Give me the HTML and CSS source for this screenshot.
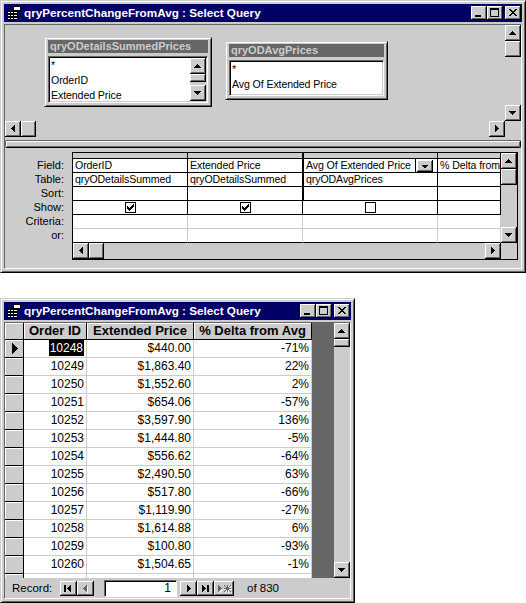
FILE: index.html
```html
<!DOCTYPE html>
<html lang="en">
<head>
<meta charset="utf-8">
<title>qryPercentChangeFromAvg : Select Query</title>
<link rel="stylesheet" href="styles.css">
</head>
<body>
<svg class="defs" aria-hidden="true">
  <defs>
    <symbol id="up" viewBox="0 0 16 16"><path d="M7 6h1v1h1v1h1v1h1v1H4V9h1V8h1V7h1z"/></symbol>
    <symbol id="dn" viewBox="0 0 16 16"><path d="M4 6h7v1h-1v1h-1v1h-1v1H7V9H6V8H5V7H4z"/></symbol>
    <symbol id="lt" viewBox="0 0 16 16"><path d="M6 7h1V6h1V5h1V4h1v7H9v-1H8V9H7V8H6z"/></symbol>
    <symbol id="rt" viewBox="0 0 16 16"><path d="M6 4h1v1h1v1h1v1h1v1H9v1H8v1H7v1H6z"/></symbol>
    <symbol id="ico" viewBox="0 0 16 14">
      <rect x="7" y="0" width="8" height="5" fill="#000"/>
      <rect x="8" y="1" width="6" height="3" fill="#fff"/>
      <rect x="1" y="4" width="11" height="10" fill="#000"/>
      <rect x="2" y="6" width="2" height="1" fill="#fff"/>
      <rect x="5" y="6" width="2" height="1" fill="#fff"/>
      <rect x="8" y="6" width="3" height="1" fill="#fff"/>
      <rect x="2" y="9" width="2" height="1" fill="#fff"/>
      <rect x="5" y="9" width="2" height="1" fill="#fff"/>
      <rect x="8" y="9" width="3" height="1" fill="#fff"/>
      <rect x="2" y="12" width="2" height="1" fill="#fff"/>
      <rect x="5" y="12" width="2" height="1" fill="#fff"/>
      <rect x="8" y="12" width="3" height="1" fill="#fff"/>
    </symbol>
    <symbol id="min" viewBox="0 0 16 14"><rect x="4" y="9" width="6" height="2"/></symbol>
    <symbol id="max" viewBox="0 0 16 14"><path fill-rule="evenodd" d="M3 2h9v9H3z M4 4h7v6H4z"/></symbol>
    <symbol id="cls" viewBox="0 0 16 14"><path d="M4 3h2v1H4z M10 3h2v1h-2z M5 4h2v1H5z M9 4h2v1H9z M6 5h4v1H6z M7 6h2v1H7z M6 7h4v1H6z M5 8h2v1H5z M9 8h2v1H9z M4 9h2v1H4z M10 9h2v1h-2z"/></symbol>
    <symbol id="chk" viewBox="0 0 11 11"><rect x="0" y="0" width="11" height="11" fill="#000"/><rect x="1" y="1" width="9" height="9" fill="#fff"/></symbol>
    <symbol id="tick" viewBox="0 0 11 11"><path d="M8 2h1v1H8z M7 3h2v1H7z M2 4h1v1H2z M6 4h3v1H6z M2 5h2v1H2z M5 5h3v1H5z M2 6h5v1H2z M3 7h3v1H3z M4 8h1v1H4z"/></symbol>
  </defs>
</svg>

<div class="win win1">
  <div class="titlebar">
    <svg class="ticon" viewBox="0 0 16 14" shape-rendering="crispEdges"><use href="#ico"/></svg>
    <span class="ttext">qryPercentChangeFromAvg : Select Query</span>
    <span class="tbtn raised"><svg viewBox="0 0 16 14"><use href="#min"/></svg></span>
    <span class="tbtn raised"><svg viewBox="0 0 16 14"><use href="#max"/></svg></span>
    <span class="tbtn close raised"><svg viewBox="0 0 16 14"><use href="#cls"/></svg></span>
  </div>
  <div class="client c1">
    <div class="upper">
      <div class="canvas">
        <div class="tbox tbox-a">
          <div class="thead">qryODetailsSummedPrices</div>
          <div class="tlist">
            <div class="titems">
              <div>*</div>
              <div>OrderID</div>
              <div>Extended Price</div>
            </div>
            <div class="vsb">
              <span class="sb raised"><svg viewBox="0 0 16 16"><use href="#up"/></svg></span>
              <span class="thumb-mini raised"></span>
              <span class="track"></span>
              <span class="sb raised"><svg viewBox="0 0 16 16"><use href="#dn"/></svg></span>
            </div>
          </div>
        </div>
        <div class="tbox tbox-b">
          <div class="thead">qryODAvgPrices</div>
          <div class="tlist">
            <div class="titems">
              <div>*</div>
              <div>Avg Of Extended Price</div>
            </div>
          </div>
        </div>
      </div>
      <div class="vsb">
        <span class="sb raised"><svg viewBox="0 0 16 16"><use href="#up"/></svg></span>
        <span class="thumb-v raised"></span>
        <span class="track"></span>
        <span class="sb raised"><svg viewBox="0 0 16 16"><use href="#dn"/></svg></span>
      </div>
      <div class="hsb">
        <span class="sb raised"><svg viewBox="0 0 16 16"><use href="#lt"/></svg></span>
        <span class="thumb-h raised"></span>
        <span class="track"></span>
        <span class="sb raised"><svg viewBox="0 0 16 16"><use href="#rt"/></svg></span>
      </div>
      <div class="corner"></div>
    </div>
    <div class="splitter"></div>
    <div class="lower">
      <div class="labels">
        <div>Field:</div>
        <div>Table:</div>
        <div>Sort:</div>
        <div>Show:</div>
        <div>Criteria:</div>
        <div>or:</div>
      </div>
      <div class="qframe">
        <div class="qcols">
          <div class="q s"></div><div class="q s"></div><div class="q s cur"></div><div class="q s"></div>

          <div class="q">OrderID</div>
          <div class="q">Extended Price</div>
          <div class="q cur ddcell"><span class="ddtext">Avg Of Extended Price</span><span class="dd"><span class="ddbtn raised"><svg viewBox="0 0 16 12"><path d="M5 5h6v1h-1v1H9v1H7V7H6V6H5z"/></svg></span></span></div>
          <div class="q">% Delta from</div>

          <div class="q">qryODetailsSummed</div>
          <div class="q">qryODetailsSummed</div>
          <div class="q cur">qryODAvgPrices</div>
          <div class="q"></div>

          <div class="q"></div><div class="q"></div><div class="q cur"></div><div class="q"></div>

          <div class="q ck"><svg class="cbox" viewBox="0 0 11 11" shape-rendering="crispEdges"><use href="#chk"/><use href="#tick"/></svg></div>
          <div class="q ck"><svg class="cbox" viewBox="0 0 11 11" shape-rendering="crispEdges"><use href="#chk"/><use href="#tick"/></svg></div>
          <div class="q ck"><svg class="cbox" viewBox="0 0 11 11" shape-rendering="crispEdges"><use href="#chk"/></svg></div>
          <div class="q"></div>

          <div class="q lt lb"></div><div class="q lt lb"></div><div class="q lt lb"></div><div class="q lt lb"></div>
          <div class="q lt"></div><div class="q lt"></div><div class="q lt"></div><div class="q lt"></div>
        </div>
        <div class="vsb">
          <span class="sb raised"><svg viewBox="0 0 16 16"><use href="#up"/></svg></span>
          <span class="thumb-v raised"></span>
          <span class="track"></span>
          <span class="sb raised"><svg viewBox="0 0 16 16"><use href="#dn"/></svg></span>
        </div>
        <div class="hsb">
          <span class="sb raised"><svg viewBox="0 0 16 16"><use href="#lt"/></svg></span>
          <span class="thumb-h raised"></span>
          <span class="track"></span>
          <span class="sb raised"><svg viewBox="0 0 16 16"><use href="#rt"/></svg></span>
        </div>
        <div class="corner"></div>
      </div>
    </div>
  </div>
</div>

<div class="win win2">
  <div class="titlebar">
    <svg class="ticon" viewBox="0 0 16 14" shape-rendering="crispEdges"><use href="#ico"/></svg>
    <span class="ttext">qryPercentChangeFromAvg : Select Query</span>
    <span class="tbtn raised"><svg viewBox="0 0 16 14"><use href="#min"/></svg></span>
    <span class="tbtn raised"><svg viewBox="0 0 16 14"><use href="#max"/></svg></span>
    <span class="tbtn close raised"><svg viewBox="0 0 16 14"><use href="#cls"/></svg></span>
  </div>
  <div class="client c2">
    <div class="dsarea">
      <div class="ds">
        <div class="h"></div><div class="h">Order ID</div><div class="h">Extended Price</div><div class="h">% Delta from Avg</div>

        <div class="rs"><svg class="cur-tri" viewBox="0 0 6 11" shape-rendering="crispEdges"><path d="M0 0h1v1h1v1h1v1h1v1h1v1h1v1h-1v1H4v1H3v1H2v1H1v1H0z"/></svg></div>
        <div class="d"><span class="hl">10248</span></div><div class="d">$440.00</div><div class="d">-71%</div>

        <div class="rs"></div><div class="d">10249</div><div class="d">$1,863.40</div><div class="d">22%</div>
        <div class="rs"></div><div class="d">10250</div><div class="d">$1,552.60</div><div class="d">2%</div>
        <div class="rs"></div><div class="d">10251</div><div class="d">$654.06</div><div class="d">-57%</div>
        <div class="rs"></div><div class="d">10252</div><div class="d">$3,597.90</div><div class="d">136%</div>
        <div class="rs"></div><div class="d">10253</div><div class="d">$1,444.80</div><div class="d">-5%</div>
        <div class="rs"></div><div class="d">10254</div><div class="d">$556.62</div><div class="d">-64%</div>
        <div class="rs"></div><div class="d">10255</div><div class="d">$2,490.50</div><div class="d">63%</div>
        <div class="rs"></div><div class="d">10256</div><div class="d">$517.80</div><div class="d">-66%</div>
        <div class="rs"></div><div class="d">10257</div><div class="d">$1,119.90</div><div class="d">-27%</div>
        <div class="rs"></div><div class="d">10258</div><div class="d">$1,614.88</div><div class="d">6%</div>
        <div class="rs"></div><div class="d">10259</div><div class="d">$100.80</div><div class="d">-93%</div>
        <div class="rs"></div><div class="d">10260</div><div class="d">$1,504.65</div><div class="d">-1%</div>
        <div class="rs"></div><div class="d"></div><div class="d"></div><div class="d"></div>
      </div>
    </div>
    <div class="vsb">
      <span class="sb raised"><svg viewBox="0 0 16 16"><use href="#up"/></svg></span>
      <span class="thumb-mini raised"></span>
      <span class="track"></span>
      <span class="sb raised"><svg viewBox="0 0 16 16"><use href="#dn"/></svg></span>
    </div>
    <div class="recbar">
      <span class="reclbl">Record:</span>
      <span class="nb raised"><svg viewBox="0 0 17 15" shape-rendering="crispEdges"><rect x="4" y="4" width="2" height="7"/><path d="M7 7h1V6h1V5h1V4h1v7h-1v-1H9V9H8V8H7z"/></svg></span>
      <span class="nb raised"><svg viewBox="0 0 17 15" shape-rendering="crispEdges"><path fill="#fff" transform="translate(1 1)" d="M6 7h1V6h1V5h1V4h1v7H9v-1H8V9H7V8H6z"/><path fill="#666" d="M6 7h1V6h1V5h1V4h1v7H9v-1H8V9H7V8H6z"/></svg></span>
      <span class="recbox">1</span>
      <span class="nb nb-next raised"><svg viewBox="0 0 17 15" shape-rendering="crispEdges"><path d="M7 4h1v1h1v1h1v1h1v1h-1v1H9v1H8v1H7z"/></svg></span>
      <span class="nb raised"><svg viewBox="0 0 17 15" shape-rendering="crispEdges"><path d="M5 4h1v1h1v1h1v1h1v1H8v1H7v1H6v1H5z"/><rect x="10" y="4" width="2" height="7"/></svg></span>
      <span class="nb nb-new raised"><svg viewBox="0 0 20 15" shape-rendering="crispEdges"><g fill="#fff" transform="translate(1 1)"><path d="M4 4h1v1h1v1h1v1h1v1H7v1H6v1H5v1H4z"/><path d="M10 4h1v1h-1z M13 4h1v1h-1z M16 4h1v1h-1z M11 5h1v1h-1z M13 5h1v1h-1z M15 5h1v1h-1z M12 6h3v1h-3z M10 7h7v1h-7z M12 8h3v1h-3z M11 9h1v1h-1z M13 9h1v1h-1z M15 9h1v1h-1z M10 10h1v1h-1z M13 10h1v1h-1z M16 10h1v1h-1z"/></g><g fill="#666"><path d="M4 4h1v1h1v1h1v1h1v1H7v1H6v1H5v1H4z"/><path d="M10 4h1v1h-1z M13 4h1v1h-1z M16 4h1v1h-1z M11 5h1v1h-1z M13 5h1v1h-1z M15 5h1v1h-1z M12 6h3v1h-3z M10 7h7v1h-7z M12 8h3v1h-3z M11 9h1v1h-1z M13 9h1v1h-1z M15 9h1v1h-1z M10 10h1v1h-1z M13 10h1v1h-1z M16 10h1v1h-1z"/></g></svg></span>
      <span class="recof">of 830</span>
    </div>
  </div>
</div>
</body>
</html>
```

FILE: styles.css
```css
* { box-sizing: border-box; margin: 0; padding: 0; }
html, body { width: 526px; height: 603px; }
body {
  position: relative;
  overflow: hidden;
  background: #fff;
  color: #000;
  font-family: "Liberation Sans", Arial, sans-serif;
  font-size: 11px;
}
.defs { position: absolute; width: 0; height: 0; overflow: hidden; }
svg { display: block; }

.raised {
  background: #ccc;
  box-shadow: inset -1px -1px #000, inset 1px 1px #fff, inset -2px -2px #666;
}

/* windows */
.win {
  position: absolute;
  left: 0;
  display: flex;
  flex-direction: column;
  background: #ccc;
  border: 1px solid;
  border-color: #ccc #000 #000 #ccc;
  box-shadow: inset 1px 1px #fff, inset -1px -1px #666;
  padding: 3px;
}
.win1 { top: 0; width: 526px; height: 273px; }
.win2 { top: 298px; width: 355px; height: 305px; }

.titlebar {
  flex: none;
  height: 18px;
  display: flex;
  align-items: center;
  background: #000066;
  color: #fff;
  padding: 0 1px 0 2px;
}
.ticon { flex: none; width: 16px; height: 14px; }
.ttext {
  flex: 1;
  margin-left: 2px;
  font-weight: bold;
  font-size: 11.7px;
  line-height: 18px;
  white-space: nowrap;
  overflow: hidden;
}
.tbtn { flex: none; width: 16px; height: 14px; display: block; }
.tbtn svg { width: 16px; height: 14px; }
.tbtn.close { margin-left: 2px; }

.client {
  flex: 1;
  min-height: 0;
  margin-top: 2px;
  border: 1px solid;
  border-color: #666 #fff #fff #666;
}
.c1 { display: flex; flex-direction: column; }

/* scrollbars */
.vsb { display: flex; flex-direction: column; background: #ccc; }
.hsb { display: flex; background: #ccc; }
.sb { flex: none; display: block; width: 16px; height: 16px; }
.sb svg { width: 16px; height: 16px; }
.thumb-v { flex: none; width: 16px; height: 16px; }
.thumb-h { flex: none; width: 15px; height: 16px; }
.thumb-mini { flex: none; width: 16px; height: 8px; }
.track { flex: 1; }
.corner { background: #ccc; }

/* upper pane */
.upper {
  flex: none;
  height: 112px;
  display: grid;
  grid-template-columns: 500px 16px;
  grid-template-rows: 96px 16px;
}
.canvas { position: relative; overflow: hidden; background: #ccc; }
.tbox {
  position: absolute;
  display: flex;
  flex-direction: column;
  gap: 3px;
  padding: 2px 3px 3px;
  background: #ccc;
  border: 1px solid;
  border-color: #ccc #000 #000 #ccc;
  box-shadow: inset 1px 1px #fff, inset -1px -1px #666;
}
.tbox-a { left: 39px; top: 12px; width: 168px; height: 70px; }
.tbox-b { left: 220px; top: 16px; width: 163px; height: 59px; }
.thead {
  flex: none;
  height: 13px;
  line-height: 13px;
  padding-left: 2px;
  background: #666;
  color: #ccc;
  font-weight: bold;
  font-size: 11px;
  white-space: nowrap;
  overflow: hidden;
}
.tlist {
  flex: 1;
  min-height: 0;
  display: flex;
  padding: 1px;
  background: #fff;
  border: 1px solid;
  border-color: #666 #fff #fff #666;
  box-shadow: inset 1px 1px #000, inset -1px -1px #ccc;
}
.titems {
  flex: 1;
  overflow: hidden;
  padding-left: 1px;
  font-size: 10.6px;
  letter-spacing: -0.1px;
}
.titems div { line-height: 15px; white-space: nowrap; }

.splitter {
  flex: none;
  height: 8px;
  margin-top: 3px;
  border: 1px solid;
  border-color: #666 #000 #000 #666;
  border-radius: 2px;
  box-shadow: inset 1px 1px #fff, inset -1px -1px #666;
}

/* lower pane */
.lower { flex: 1; display: flex; align-items: flex-start; }
.labels {
  flex: none;
  width: 67px;
  padding: 11px 8px 0 0;
  text-align: right;
}
.labels div { height: 14px; line-height: 13px; white-space: nowrap; }
.qframe {
  flex: none;
  margin-top: 4px;
  width: 446px;
  height: 108px;
  border: 1px solid #000;
  display: grid;
  grid-template-columns: 428px 16px;
  grid-template-rows: 90px 16px;
}
.qcols {
  display: grid;
  grid-template-columns: 115px 115px 135px 63px;
  grid-template-rows: 6px repeat(6, 14px);
  overflow: hidden;
  background: #fff;
  font-size: 10.6px;
  letter-spacing: -0.1px;
}
.q {
  border-right: 1px solid #000;
  border-bottom: 1px solid #000;
  padding-left: 2px;
  line-height: 13px;
  white-space: nowrap;
  overflow: hidden;
}
.q.s { background: #ccc; }
.q.lt { border-right-color: #ccc; }
.q.lb { border-bottom-color: #ccc; }
.q.cur { box-shadow: inset 1px 0 #000; padding-left: 3px; }
.q.ck { display: flex; align-items: center; justify-content: center; padding-left: 0; }
.cbox { width: 11px; height: 11px; }
.ddcell { display: flex; }
.ddtext { flex: 1; overflow: hidden; white-space: nowrap; }
.dd {
  flex: none;
  display: flex;
  border-left: 1px solid #000;
  padding: 0 4px 0 1px;
}
.ddbtn { display: block; width: 16px; height: 12px; margin-top: 1px; }
.ddbtn svg { width: 16px; height: 12px; }

/* datasheet window */
.c2 {
  display: grid;
  grid-template-columns: 329px 16px;
  grid-template-rows: 255px 20px;
}
.dsarea { background: #666; overflow: hidden; }
.ds {
  display: grid;
  width: 307px;
  grid-template-columns: 19px 63px 107px 118px;
  grid-template-rows: 17px;
  grid-auto-rows: 18px;
}
.h {
  background: #ccc;
  border-right: 1px solid #000;
  border-bottom: 1px solid #000;
  box-shadow: inset 1px 1px #fff;
  font-weight: bold;
  font-size: 13px;
  line-height: 16px;
  text-align: center;
  white-space: nowrap;
  overflow: hidden;
}
.rs {
  background: #ccc;
  border-right: 1px solid #000;
  border-bottom: 1px solid #000;
  box-shadow: inset 1px 1px #fff;
  display: flex;
  align-items: center;
  padding-left: 7px;
}
.cur-tri { width: 6px; height: 11px; }
.d {
  background: #fff;
  border-right: 1px solid #ccc;
  border-bottom: 1px solid #ccc;
  padding-right: 2px;
  text-align: right;
  font-size: 12px;
  line-height: 17px;
  white-space: nowrap;
  overflow: hidden;
}
.hl { background: #000; color: #fff; padding: 1px 1px; }

.recbar {
  grid-column: 1 / 3;
  display: flex;
  align-items: center;
  background: #ccc;
  font-size: 11.5px;
}
.reclbl { flex: none; width: 48px; margin-left: 7px; }
.nb { flex: none; display: block; width: 17px; height: 15px; }
.nb svg { width: 17px; height: 15px; }
.nb-next { margin-left: 3px; }
.nb-new { width: 20px; }
.nb-new svg { width: 20px; height: 15px; }
.recbox {
  flex: none;
  width: 73px;
  height: 17px;
  margin-left: 10px;
  padding-right: 5px;
  background: #fff;
  border: 1px solid;
  border-color: #666 #fff #fff #666;
  box-shadow: inset 1px 1px #000;
  text-align: right;
  font-size: 12px;
  line-height: 15px;
}
.recof { margin-left: 13px; white-space: nowrap; }
```
